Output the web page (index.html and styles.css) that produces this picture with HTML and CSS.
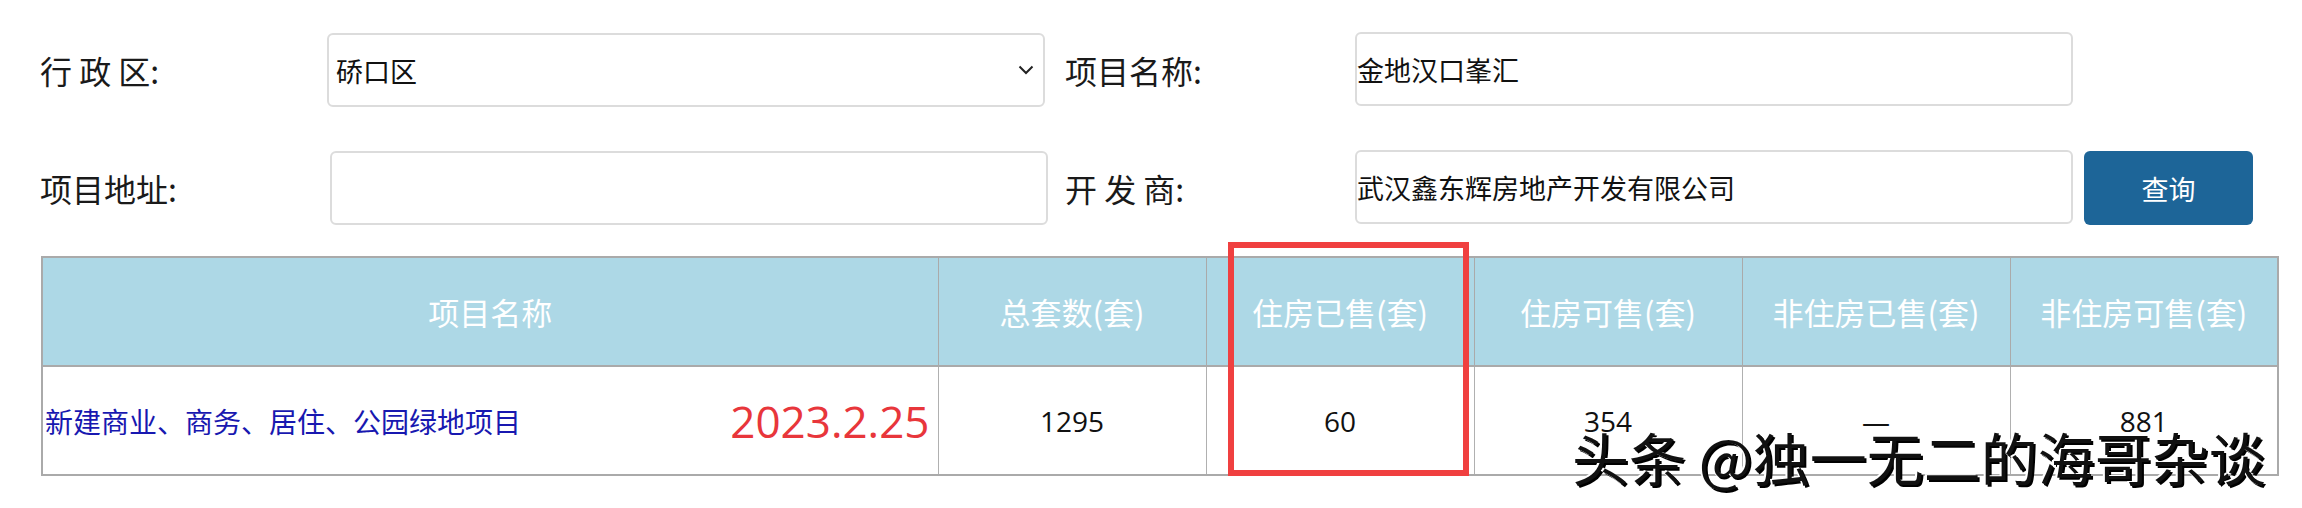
FILE: index.html
```html
<!DOCTYPE html>
<html lang="zh-CN">
<head>
<meta charset="utf-8">
<title>项目查询</title>
<link rel="stylesheet" href="styles.css">
</head>
<body>
<div class="page">
  <form class="search">
    <label class="lbl">行 政 区:</label>
    <div class="select">
      <span>硚口区</span>
      <svg class="chev" width="16" height="10" viewBox="0 0 16 10"><path d="M1.5 1.5 L8 8 L14.5 1.5" fill="none" stroke="#222" stroke-width="2"/></svg>
    </div>
    <label class="lbl lbl2">项目名称:</label>
    <input class="field field-r" type="text" value="金地汉口峯汇">
    <span></span>

    <label class="lbl">项目地址:</label>
    <input class="field field-l" type="text" value="">
    <label class="lbl lbl2">开 发 商:</label>
    <input class="field field-r" type="text" value="武汉鑫东辉房地产开发有限公司">
    <button type="button" class="btn">查询</button>
  </form>

  <table class="grid">
    <colgroup>
      <col class="c-name"><col class="c-num"><col class="c-num"><col class="c-num"><col class="c-num"><col class="c-num">
    </colgroup>
    <thead>
      <tr>
        <th>项目名称</th>
        <th>总套数(套)</th>
        <th>住房已售(套)</th>
        <th>住房可售(套)</th>
        <th>非住房已售(套)</th>
        <th>非住房可售(套)</th>
      </tr>
    </thead>
    <tbody>
      <tr>
        <td class="name-cell"><div class="name-wrap"><a class="proj">新建商业、商务、居住、公园绿地项目</a><span class="date">2023.2.25</span></div></td>
        <td class="num">1295</td>
        <td class="num">60</td>
        <td class="num">354</td>
        <td class="num">—</td>
        <td class="num">881</td>
      </tr>
    </tbody>
  </table>

  <div class="mark"></div>
  <div class="watermark">头条 @独一无二的海哥杂谈</div>
</div>
</body>
</html>
```

FILE: styles.css
```css
html, body {
  margin: 0;
  padding: 0;
  background: #fff;
}
body {
  font-family: "Noto Sans CJK SC", "Open Sans", sans-serif;
  color: #111;
}
.page {
  position: relative;
  width: 2302px;
  height: 508px;
  overflow: hidden;
}
.search {
  display: grid;
  grid-template-columns: 287px 721px 307px 718px 180px;
  grid-auto-rows: 74px;
  row-gap: 44px;
  padding: 33px 0 0 40px;
  margin: 0;
  align-items: center;
}
.lbl {
  font-size: 32px;
  line-height: 1;
  color: #1a1a1a;
  white-space: pre;
}
.lbl2 {
  padding-left: 17px;
}
.select, .field {
  box-sizing: border-box;
  height: 74px;
  width: 718px;
  border: 2px solid #dcdcdc;
  border-radius: 6px;
  background: #fff;
}
.select {
  display: flex;
  align-items: center;
  justify-content: space-between;
  padding: 0 9px 0 7px;
  font-size: 27px;
  color: #111;
}
.chev {
  display: block;
}
.field {
  margin: 0;
  padding: 0;
  font-family: "Noto Sans CJK SC", sans-serif;
  font-size: 27px;
  color: #111;
  outline: none;
}
.field-l {
  margin-left: 3px;
}
.field-r {
  margin-top: -2px;
}
.btn {
  margin-left: 11px;
  width: 169px;
  height: 74px;
  border: none;
  border-radius: 6px;
  background: #1d6598;
  color: #fff;
  font-family: "Noto Sans CJK SC", sans-serif;
  font-size: 27px;
  cursor: pointer;
}
.grid {
  margin: 31px 0 0 41px;
  width: 2238px;
  border-collapse: collapse;
  table-layout: fixed;
  border: 2px solid #aaa;
}
.c-name { width: 896px; }
.c-num { width: 268px; }
.grid th {
  height: 107px;
  padding: 0;
  background: #add8e6;
  color: #fff;
  font-weight: normal;
  font-size: 31px;
  border-left: 1px solid #aaa;
  border-right: 1px solid #aaa;
  border-bottom: 2px solid #aaa;
}
.grid td {
  height: 107px;
  padding: 0;
  border: 1px solid #b0b0b0;
  text-align: center;
  vertical-align: middle;
}
.name-cell {
  text-align: left;
}
.name-wrap {
  display: flex;
  justify-content: space-between;
  align-items: center;
  padding: 0 8px 0 2px;
}
.proj {
  font-size: 28px;
  color: #1818b0;
}
.date {
  font-family: "Open Sans", "Liberation Sans", sans-serif;
  font-size: 44px;
  color: #e8363b;
}
.num {
  font-family: "Open Sans", "Liberation Sans", sans-serif;
  font-size: 28px;
  color: #111;
}
.mark {
  position: absolute;
  left: 1228px;
  top: 242px;
  width: 241px;
  height: 234px;
  box-sizing: border-box;
  border: 6px solid #f04040;
}
.watermark {
  position: absolute;
  left: 1572px;
  top: 428px;
  font-size: 57px;
  line-height: 1;
  color: #111;
  white-space: nowrap;
  text-shadow: -2px -1px 0 #fff, 2px 2px 0 #000;
}
```
